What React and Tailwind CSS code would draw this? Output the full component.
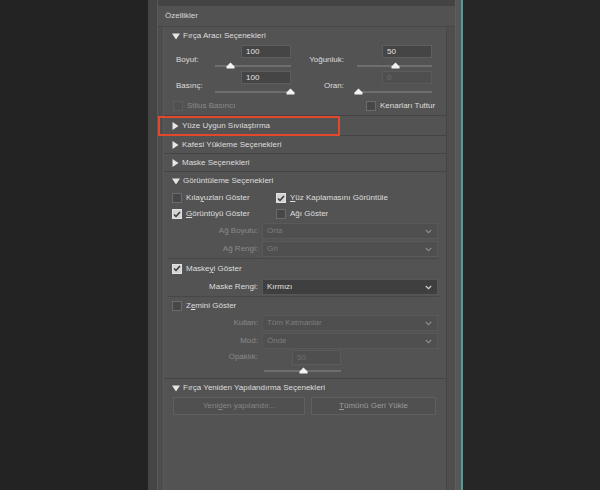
import React from 'react';

const on = 'text-[#dedede]';
const off = 'text-[#8a8a8a]';

function Tri({ open }) {
  return open ? (
    <svg width="8" height="7" viewBox="0 0 8 7" className="shrink-0">
      <path d="M0 0.5 L8 0.5 L4 6.5 Z" fill="#e6e6e6" />
    </svg>
  ) : (
    <svg width="7" height="8" viewBox="0 0 7 8" className="shrink-0">
      <path d="M0.5 0 L6.5 4 L0.5 8 Z" fill="#e6e6e6" />
    </svg>
  );
}

function Check({ checked, disabled }) {
  if (checked)
    return (
      <span className="w-[10px] h-[10px] bg-[#d4d4d4] border border-[#e2e2e2] flex items-center justify-center shrink-0">
        <svg width="8" height="7" viewBox="0 0 8 7">
          <path d="M1 3.5 L3 5.5 L7 1" stroke="#3a3a3a" strokeWidth="1.5" fill="none" />
        </svg>
      </span>
    );
  return (
    <span
      className={
        'w-[10px] h-[10px] shrink-0 border ' +
        (disabled ? 'bg-[#505050] border-[#5c5c5c]' : 'bg-[#474747] border-[#6b6b6b]')
      }
    />
  );
}

function Slider({ pos }) {
  return (
    <div className="relative h-[12px] w-full">
      <div className="absolute left-0 right-0 top-[6px] h-[2px] bg-[#6e6e6e]" />
      <svg width="9" height="7" viewBox="0 0 9 7" className="absolute top-[3px]" style={{ left: pos - 4 }}>
        <path d="M0.5 6.5 L0.5 4.5 L4.5 0.5 L8.5 4.5 L8.5 6.5 Z" fill="#f2f2f2" />
      </svg>
    </div>
  );
}

function Input({ value, disabled, w = 'w-[50px]', h = 'h-[14px]' }) {
  return (
    <div
      className={
        w + ' ' + h + ' ml-auto border flex items-center pl-[4px] text-[8px] leading-none ' +
        (disabled ? 'bg-[#4f4f4f] border-[#5b5b5b] text-[#6e6e6e]' : 'bg-[#454545] border-[#5e5e5e] text-[#e2e2e2]')
      }>
      {value}
    </div>
  );
}

function Chevron({ color }) {
  return (
    <svg width="7" height="5" viewBox="0 0 7 5" className="ml-auto mr-[5px]">
      <path d="M0.8 1 L3.5 3.7 L6.2 1" stroke={color} strokeWidth="1.2" fill="none" />
    </svg>
  );
}

function SelectRow({ label, value, disabled, h = 'h-[18px]' }) {
  return (
    <div className={'flex items-center ' + h}>
      <div className={'w-[94px] text-right ' + (disabled ? off : on)}>{label}</div>
      <div
        className={
          'ml-[4px] w-[176px] h-[16px] flex items-center pl-[4px] border ' +
          (disabled ? 'bg-[#4f4f4f] border-[#595959] text-[#7c7c7c]' : 'bg-[#3f3f3f] border-[#575757] text-[#e2e2e2]')
        }>
        {value}
        <Chevron color={disabled ? '#8a8a8a' : '#d0d0d0'} />
      </div>
    </div>
  );
}

function SectionHead({ title, open, h = 'h-[18px]', border = true }) {
  return (
    <div className={'flex items-center pl-[8px] gap-[3px] ' + h + (border ? ' border-b border-[#444444]' : '')}>
      <Tri open={open} />
      <span className={on}>{title}</span>
    </div>
  );
}

export default function App() {
  return (
    <div
      className="w-[600px] h-[490px] flex bg-[#232323] overflow-hidden text-[8px] leading-[10px]"
      style={{ fontFamily: '"Liberation Sans", Arial, sans-serif' }}>
      <div className="w-[148px] bg-[#232323]" />
      <div className="w-[10px] bg-[#454545] border-r border-[#5a5a5a]" />

      <div className="relative w-[297px] flex flex-col bg-[#4d4d4d]">
        <div className="h-[6px] bg-[#444444]" />
        <div className="h-[21px] flex items-center pl-[7px] bg-[#525252] border-b border-[#464646]">
          <span className="text-[#d8d8d8]">Özellikler</span>
        </div>

        <div className="flex flex-1">
          <div className="w-[6px] border-r border-[#5a5a5a]" />
          <div className="w-[283px] bg-[#535353] border-r border-[#474747] flex flex-col">
            {/* Fırça Aracı */}
            <SectionHead title="Fırça Aracı Seçenekleri" open border={false} />
            {[
              { l: 'Boyut:', v: '100', p: 15, r: 'Yoğunluk:', rv: '50', rp: 38 },
              { l: 'Basınç:', v: '100', p: 75, r: 'Oran:', rv: '0', rp: 1, rd: true },
            ].map((row) => (
              <div key={row.l} className="flex h-[26px]">
                <div className={'w-[51px] pl-[12px] mt-[10px] ' + on}>{row.l}</div>
                <div className="w-[76px] flex flex-col">
                  <Input value={row.v} />
                  <div className="mt-[1px]">
                    <Slider pos={row.p} />
                  </div>
                </div>
                <div className={'w-[66px] pr-[13px] text-right mt-[10px] ' + on}>{row.r}</div>
                <div className="w-[75px] flex flex-col">
                  <Input value={row.rv} disabled={row.rd} />
                  <div className="mt-[1px]">
                    <Slider pos={row.rp} />
                  </div>
                </div>
              </div>
            ))}
            <div className="h-[19px] flex items-center border-b border-[#444444]">
              <div className="flex items-center gap-[4px] pl-[9px] w-[202px]">
                <Check disabled />
                <span className={off}>Stilus Basıncı</span>
              </div>
              <div className="flex items-center gap-[4px]">
                <Check />
                <span className={on}>Kenarları Tuttur</span>
              </div>
            </div>

            <SectionHead title="Yüze Uygun Sıvılaştırma" h="h-[20px]" />
            <SectionHead title="Kafesi Yükleme Seçenekleri" />
            <SectionHead title="Maske Seçenekleri" />

            {/* Görüntüleme */}
            <div className="border-b border-[#444444] pb-[1px]">
              <SectionHead title="Görüntüleme Seçenekleri" open border={false} />
              <div className="grid grid-cols-[104px_1fr] pl-[8px]">
                <div className="h-[16px] flex items-center gap-[4px]">
                  <Check />
                  <span className={on}>
                    Kıla<span className="underline">y</span>uzları Göster
                  </span>
                </div>
                <div className="h-[16px] flex items-center gap-[4px]">
                  <Check checked />
                  <span className={on}>
                    <span className="underline">Y</span>üz Kaplamasını Görüntüle
                  </span>
                </div>
                <div className="h-[16px] flex items-center gap-[4px]">
                  <Check checked />
                  <span className={on}>
                    <span className="underline">G</span>örüntüyü Göster
                  </span>
                </div>
                <div className="h-[16px] flex items-center gap-[4px]">
                  <Check />
                  <span className={on}>Ağı Göster</span>
                </div>
              </div>
              <SelectRow label="Ağ Boyutu:" value="Orta" disabled />
              <SelectRow label="Ağ Rengi:" value="Gri" disabled />
              <div className="h-px bg-[#474747] ml-[4px] mr-[7px]" />
              <div className="h-[19px] flex items-center gap-[4px] pl-[8px]">
                <Check checked />
                <span className={on}>
                  Maske<span className="underline">y</span>i Göster
                </span>
              </div>
              <SelectRow label="Maske Rengi:" value="Kırmızı" />
              <div className="h-px bg-[#474747] ml-[4px] mr-[7px]" />
              <div className="h-[17px] flex items-center gap-[4px] pl-[8px]">
                <Check />
                <span className={on}>
                  Z<span className="underline">e</span>mini Göster
                </span>
              </div>
              <SelectRow label="Kullan:" value="Tüm Katmanlar" disabled />
              <SelectRow label="Mod:" value="Önde" disabled />
              <div className="flex h-[27px]">
                <div className={'w-[94px] text-right mt-[2px] ' + off}>Opaklık:</div>
                <div className="ml-[6px] w-[77px] flex flex-col">
                  <Input value="50" disabled w="w-[49px]" h="h-[15px]" />
                  <div className="-mt-[1px]">
                    <Slider pos={39} />
                  </div>
                </div>
              </div>
            </div>

            {/* Fırça Yeniden */}
            <SectionHead title="Fırça Yeniden Yapılandırma Seçenekleri" open border={false} />
            <div className="flex gap-[6px] pl-[9px]">
              <div className="w-[132px] h-[18px] flex items-center justify-center bg-[#505050] border border-[#5f5f5f] text-[#868686]">
                <span>
                  Yeni<span className="underline">d</span>en yapılandır...
                </span>
              </div>
              <div className="w-[125px] h-[18px] flex items-center justify-center bg-[#505050] border border-[#5f5f5f] text-[#9c9c9c]">
                <span>
                  <span className="underline">T</span>ümünü Geri Yükle
                </span>
              </div>
            </div>
          </div>
          <div className="w-[8px] bg-[#4e4e4e]" />
        </div>

        <div className="absolute left-0 top-[116px] w-[182px] h-[20px] border-2 border-[#e4482a]" />
      </div>

      <div className="w-[6px] bg-[#575757] border-l border-[#5f5f5f]" />
      <div className="w-[2px] bg-[#4f9d9a]" />
      <div className="flex-1 bg-[#262626]" />
    </div>
  );
}
